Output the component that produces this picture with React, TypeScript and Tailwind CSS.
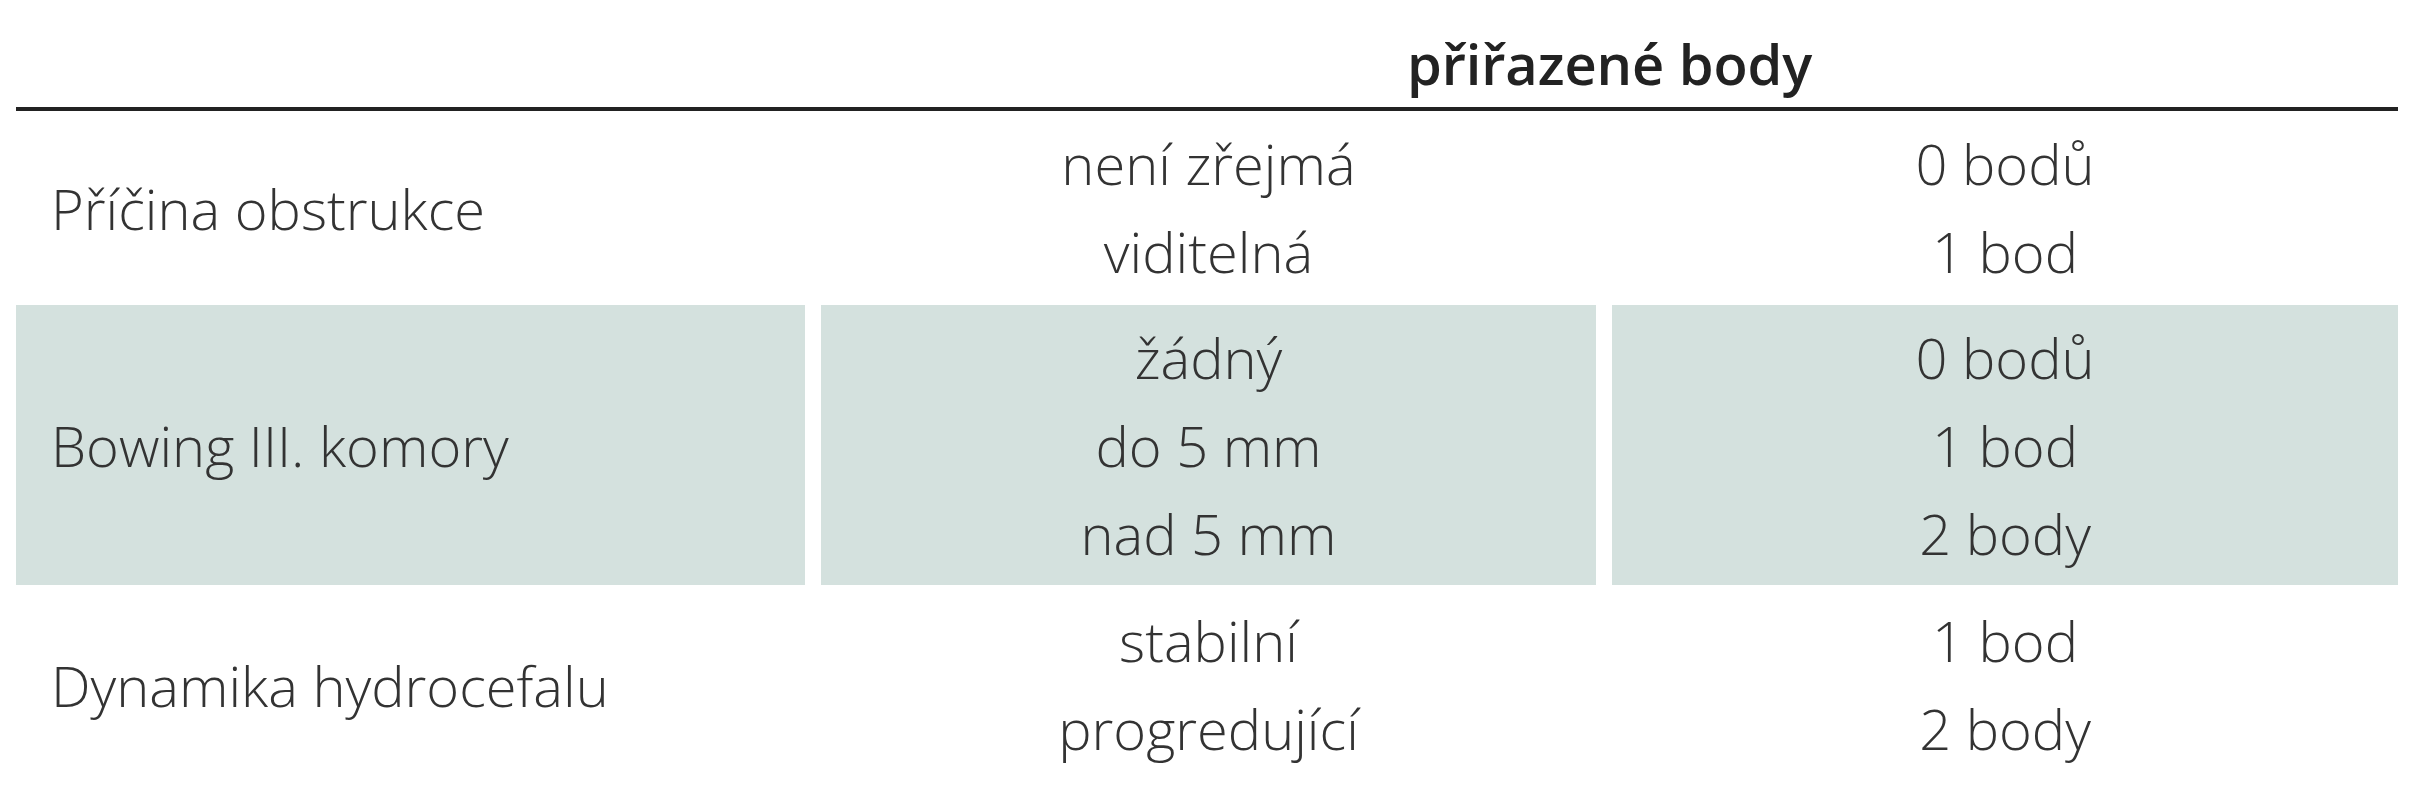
const rows = [
  {
    label: "Příčina obstrukce",
    options: ["není zřejmá", "viditelná"],
    points: ["0 bodů", "1 bod"],
    shaded: false,
    height: "h-[194px] pt-[8px]",
  },
  {
    label: "Bowing III. komory",
    options: ["žádný", "do 5 mm", "nad 5 mm"],
    points: ["0 bodů", "1 bod", "2 body"],
    shaded: true,
    height: "h-[280px] pt-[8px]",
  },
  {
    label: "Dynamika hydrocefalu",
    options: ["stabilní", "progredující"],
    points: ["1 bod", "2 body"],
    shaded: false,
    height: "h-[200px] pt-[11px]",
  },
];

export default function App() {
  return (
    <div
      className="w-[2420px] h-[800px] bg-white pl-[16px] pr-[22px] text-[#333] overflow-hidden"
      style={{ fontFamily: '"Open Sans", "Noto Sans", sans-serif' }}
    >
      {/* header */}
      <div className="grid grid-cols-[805px_1fr] h-[111px] border-b-4 border-[#222]">
        <div />
        <div className="flex justify-center pt-[19px] text-[56px] leading-[88px] font-semibold tracking-[-0.1px] text-[#222]">
          přiřazené body
        </div>
      </div>

      {/* body rows */}
      {rows.map((row) => (
        <div key={row.label} className="grid grid-cols-[789px_775px_786px] gap-x-[16px]">
          <div
            className={`flex items-center pl-[35px] text-[56px] leading-[88px] font-light ${row.height} !pt-0 ${
              row.shaded ? "bg-[#d4e1de]" : ""
            }`}
          >
            {row.label}
          </div>
          <div
            className={`flex flex-col items-center text-[56px] leading-[88px] font-light ${row.height} ${
              row.shaded ? "bg-[#d4e1de]" : ""
            }`}
          >
            {row.options.map((o) => (
              <span key={o}>{o}</span>
            ))}
          </div>
          <div
            className={`flex flex-col items-center text-[56px] leading-[88px] font-light ${row.height} ${
              row.shaded ? "bg-[#d4e1de]" : ""
            }`}
          >
            {row.points.map((p) => (
              <span key={p}>{p}</span>
            ))}
          </div>
        </div>
      ))}
    </div>
  );
}
